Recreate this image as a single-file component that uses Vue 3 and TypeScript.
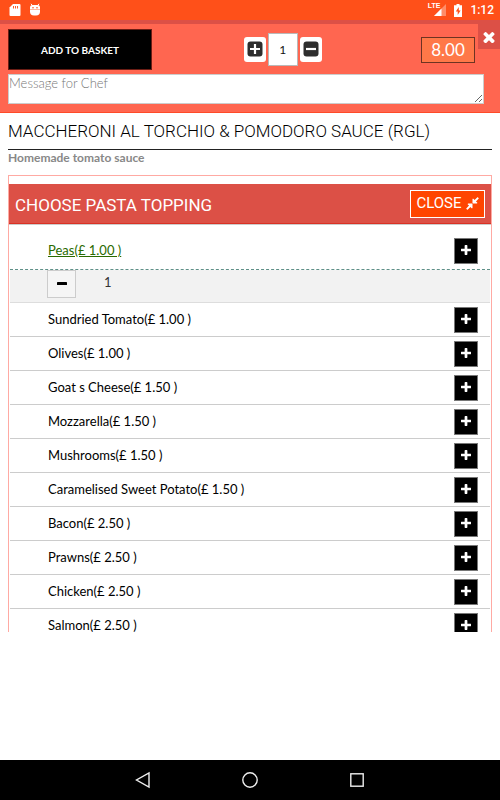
<script setup lang="ts">
import { ref } from 'vue'

interface Topping {
  name: string
  price: string
  quantity: number
}

const quantity = ref(1)
const message = ref('')

const toppings = ref<Topping[]>([
  { name: 'Peas', price: '1.00', quantity: 1 },
  { name: 'Sundried Tomato', price: '1.00', quantity: 0 },
  { name: 'Olives', price: '1.00', quantity: 0 },
  { name: 'Goat s Cheese', price: '1.50', quantity: 0 },
  { name: 'Mozzarella', price: '1.50', quantity: 0 },
  { name: 'Mushrooms', price: '1.50', quantity: 0 },
  { name: 'Caramelised Sweet Potato', price: '1.50', quantity: 0 },
  { name: 'Bacon', price: '2.50', quantity: 0 },
  { name: 'Prawns', price: '2.50', quantity: 0 },
  { name: 'Chicken', price: '2.50', quantity: 0 },
  { name: 'Salmon', price: '2.50', quantity: 0 },
])

const plusPath =
  'M1600 736v192q0 40-28 68t-68 28h-416v416q0 40-28 68t-68 28h-192q-40 0-68-28t-28-68v-416h-416q-40 0-68-28t-28-68v-192q0-40 28-68t68-28h416v-416q0-40 28-68t68-28h192q40 0 68 28t28 68v416h416q40 0 68 28t28 68z'
const timesPath =
  'M1490 1322q0 40-28 68l-136 136q-28 28-68 28t-68-28l-294-294-294 294q-28 28-68 28t-68-28l-136-136q-28-28-28-68t28-68l294-294-294-294q-28-28-28-68t28-68l136-136q28-28 68-28t68 28l294 294 294-294q28-28 68-28t68 28l136 136q28 28 28 68t-28 68l-294 294 294 294q28 28 28 68z'
const compressPath =
  'M896 960v448q0 26-19 45t-45 19-45-19l-144-144-332 332q-10 10-23 10t-23-10l-114-114q-10-10-10-23t10-23l332-332-144-144q-19-19-19-45t19-45 45-19h448q26 0 45 19t19 45zm755-672q0 13-10 23l-332 332 144 144q19 19 19 45t-19 45-45 19h-448q-26 0-45-19t-19-45v-448q0-26 19-45t45-19 45 19l144 144 332-332q10-10 23-10t23 10l114 114q10 10 10 23z'
</script>

<template>
  <div class="screen">
    <div class="status">
      <svg class="status-icon" viewBox="0 0 12 14" aria-hidden="true">
        <path d="M4 1h6.500q1 0 1 1v10q0 1-1 1h-9q-1 0-1-1V4.500z" fill="#fff" />
        <path d="M4.500 3v2.500M6.500 3v2.500M8.500 3v2.500" stroke="#ff5a28" stroke-width="1" />
      </svg>
      <svg class="status-icon" viewBox="0 0 12 14" aria-hidden="true">
        <path d="M2 .8l1.500 2M10 .8l-1.500 2" stroke="#fff" stroke-width="1" />
        <path d="M1 4.500q0-2.500 2.500-2.500h5q2.500 0 2.500 2.500v4q0 4-4 4H5q-4 0-4-4z" fill="#fff" />
        <path d="M1 6.500h10" stroke="#ff8a60" stroke-width=".6" />
        <circle cx="4" cy="4.800" r=".8" fill="#ff5019" />
        <circle cx="8" cy="4.800" r=".8" fill="#ff5019" />
      </svg>
      <span class="spacer"></span>
      <span class="signal">
        <span class="lte">LTE</span>
        <svg class="signal-icon" viewBox="0 0 12 12" aria-hidden="true">
          <path d="M12 0v12H0z" fill="#fff" fill-opacity=".35" />
          <path d="M7.500 4.500V12H0z" fill="#fff" />
        </svg>
      </span>
      <svg class="battery" viewBox="0 0 8 13" aria-hidden="true">
        <path d="M2.500 0h3v1.200H8V13H0V1.200h2.500z" fill="#fff" />
        <path d="M4.800 3L1.800 7.500h1.900V11l2.900-4.500H4.800z" fill="#ff5019" />
      </svg>
      <span class="clock">1:12</span>
    </div>

    <header class="order">
      <div class="order-row">
        <button type="button" class="basket">ADD TO BASKET</button>
        <div class="stepper">
          <button type="button" class="step" aria-label="Increase quantity" @click="quantity++">
            <svg viewBox="0 0 16 16" class="step-icon" aria-hidden="true">
              <rect x=".5" y=".5" width="15" height="15" rx="3" fill="#2e2e2e" />
              <path d="M8 3v10M3 8h10" stroke="#fff" stroke-width="2.200" />
            </svg>
          </button>
          <input v-model="quantity" class="amount" type="text" aria-label="Quantity" />
          <button type="button" class="step" aria-label="Decrease quantity" @click="quantity--">
            <svg viewBox="0 0 16 16" class="step-icon" aria-hidden="true">
              <rect x=".5" y=".5" width="15" height="15" rx="3" fill="#2e2e2e" />
              <path d="M3 8h10" stroke="#fff" stroke-width="2.200" />
            </svg>
          </button>
        </div>
        <output class="price">8.00</output>
      </div>
      <textarea v-model="message" class="message" placeholder="Message for Chef" aria-label="Message for Chef"></textarea>
      <button type="button" class="dismiss" aria-label="Close">
        <svg viewBox="256 256 1280 1280" class="dismiss-icon" aria-hidden="true"><path :d="timesPath" fill="#fff" /></svg>
      </button>
    </header>

    <main class="dish">
      <h1 class="dish-name">MACCHERONI AL TORCHIO &amp; POMODORO SAUCE (RGL)</h1>
      <p class="dish-note">Homemade tomato sauce</p>
      <section class="panel">
        <div class="panel-head">
          <h2 class="panel-title">CHOOSE PASTA TOPPING</h2>
          <button type="button" class="collapse">
            CLOSE
            <svg viewBox="120 120 1552 1552" class="collapse-icon" aria-hidden="true"><path :d="compressPath" fill="#fff" /></svg>
          </button>
        </div>
        <ul class="toppings">
          <li v-for="item in toppings" :key="item.name">
            <div class="topping" :class="{ chosen: item.quantity > 0 }">
              <span class="topping-name">{{ item.name }}(£ {{ item.price }} )</span>
              <button type="button" class="add" :aria-label="'Add ' + item.name" @click="item.quantity++">
                <svg viewBox="192 128 1408 1408" class="add-icon" aria-hidden="true"><path :d="plusPath" fill="#fff" /></svg>
              </button>
            </div>
            <div v-if="item.quantity > 0" class="selected">
              <button type="button" class="remove" :aria-label="'Remove ' + item.name" @click="item.quantity--">
                <svg viewBox="0 0 10 10" class="remove-icon" aria-hidden="true"><rect y="3" width="10" height="3" rx=".6" /></svg>
              </button>
              <span class="count">{{ item.quantity }}</span>
            </div>
          </li>
        </ul>
      </section>
    </main>

    <nav class="system-nav">
      <button type="button" class="nav-button" aria-label="Back">
        <svg viewBox="0 0 18 18" class="nav-icon"><path d="M15 2v14L2.500 9z" /></svg>
      </button>
      <button type="button" class="nav-button" aria-label="Home">
        <svg viewBox="0 0 18 18" class="nav-icon"><circle cx="9" cy="9" r="7.200" /></svg>
      </button>
      <button type="button" class="nav-button" aria-label="Recent apps">
        <svg viewBox="0 0 18 18" class="nav-icon"><rect x="2.800" y="2.800" width="12.400" height="12.400" /></svg>
      </button>
    </nav>
  </div>
</template>

<style>
body {
  background: #fff;
}
</style>

<style scoped>
* {
  box-sizing: border-box;
}
.screen {
  display: flex;
  flex-direction: column;
  height: 100vh;
  font-family: Lato, "Liberation Sans", sans-serif;
  font-size: 13px;
  color: #000;
}
button {
  padding: 0;
  margin: 0;
  border: 0;
  font-family: inherit;
  display: flex;
  align-items: center;
  justify-content: center;
}
svg {
  display: block;
  flex: none;
}
.status {
  display: flex;
  align-items: center;
  gap: 8px;
  height: 20px;
  flex: none;
  padding: 0 6px 0 9px;
  background: #ff5019;
  color: #fff;
}
.status-icon {
  width: 12px;
  height: 14px;
}
.spacer {
  flex: 1;
}
.signal {
  display: flex;
  align-items: flex-end;
  position: relative;
}
.signal-icon {
  width: 12px;
  height: 12px;
}
.lte {
  position: absolute;
  right: 6px;
  top: -2px;
  font: 700 7px/8px "Liberation Sans", sans-serif;
}
.battery {
  width: 8px;
  height: 13px;
}
.clock {
  font: 500 12px/20px Roboto, sans-serif;
}
.order {
  position: relative;
  flex: none;
  padding: 5px 16px 8px 8px;
  background: #ff6650;
  border-top: 4px solid #dc5046;
  border-bottom: 1px solid #ff4a28;
}
.order-row {
  display: grid;
  grid-template-columns: 20fr auto 13fr;
  align-items: center;
  height: 41px;
  padding-right: 9px;
  margin-bottom: 4px;
}
.basket {
  width: 144px;
  height: 41px;
  border: 1px solid #6b1d14;
  background: #000;
  color: #fff;
  font-size: 10px;
  font-weight: 700;
}
.stepper {
  display: flex;
  align-items: center;
  gap: 2px;
}
.step {
  width: 22px;
  height: 25px;
  padding-bottom: 2px;
  border-radius: 3px;
  background: #fff;
}
.step-icon {
  width: 16px;
  height: 16px;
}
.amount {
  width: 30px;
  height: 33px;
  padding: 0;
  border: 1px solid #b9b9b9;
  background: #fff;
  text-align: center;
  font: 12px Lato, sans-serif;
  color: #111;
}
.price {
  justify-self: end;
  width: 54px;
  height: 26px;
  border: 1px solid #6e3322;
  background: #ff7848;
  color: #fff;
  font-size: 17px;
  line-height: 24px;
  text-align: center;
}
.message {
  display: block;
  width: 100%;
  height: 30px;
  padding: 0;
  border: 1px solid #ccc;
  background: #fff;
  font: 300 13px/17px Lato, sans-serif;
  color: #111;
}
.message::placeholder {
  color: #777;
}
.dismiss {
  position: absolute;
  top: 0;
  right: 0;
  width: 22px;
  height: 25px;
  background: #dc5046;
}
.dismiss-icon {
  width: 12px;
  height: 12px;
}
.dish {
  flex: 1;
  min-height: 0;
  overflow: hidden;
  padding: 0 8px;
  margin-bottom: 128px;
}
.dish-name {
  margin: 0;
  padding-top: 6px;
  height: 37px;
  border-bottom: 1px solid #222;
  font: 300 17px/24px Roboto, sans-serif;
  color: #000;
}
.dish-note {
  margin: 0 0 9px;
  font-size: 12px;
  line-height: 16px;
  font-weight: 700;
  color: #888;
}
.panel {
  border: 1px solid #ffaaa3;
  padding-top: 8px;
}
.panel-head {
  display: flex;
  align-items: center;
  justify-content: space-between;
  height: 40px;
  padding: 0 6px;
  background: #dc5046;
  border-bottom: 1px solid #d93225;
}
.panel-title {
  margin: 0;
  padding-top: 3px;
  font: 400 17px/24px Roboto, sans-serif;
  color: #fff;
}
.collapse {
  gap: 4px;
  width: 75px;
  height: 28px;
  padding-bottom: 1px;
  border: 1px solid #fff;
  background: #ff4500;
  color: #fff;
  font: 400 15px/20px Roboto, sans-serif;
}
.collapse-icon {
  width: 13px;
  height: 13px;
}
.toppings {
  list-style: none;
  margin: 0;
  padding: 8px 1px 0;
  border-top: 1px solid #ccc;
}
.topping {
  display: flex;
  align-items: center;
  justify-content: space-between;
  height: 34px;
  padding: 0 12px 0 38px;
  border-bottom: 1px solid #ccc;
}
.topping-name {
  line-height: 20px;
  padding-bottom: 2px;
}
.topping.chosen {
  height: 37px;
  border-bottom: 1px dashed #5f9088;
}
.chosen .topping-name {
  color: #2a6a00;
  text-decoration: underline;
}
.add {
  width: 24px;
  height: 26px;
  padding-bottom: 2px;
  border: 1px solid #777;
  background: #000;
}
.add-icon {
  width: 10px;
  height: 10px;
}
.selected {
  display: flex;
  align-items: center;
  gap: 28px;
  height: 33px;
  padding: 0 0 4px 37px;
  border-bottom: 1px solid #ddd;
  background: #f2f2f2;
}
.remove {
  width: 29px;
  height: 28px;
  border: 1px solid #ccc;
  background: #f5f5f5;
}
.remove-icon {
  width: 10px;
  height: 10px;
}
.count {
  padding-bottom: 4px;
  line-height: 16px;
  color: #333;
}
.system-nav {
  display: flex;
  flex: none;
  align-items: center;
  justify-content: center;
  height: 40px;
  gap: 67px;
  background: #000;
}
.nav-button {
  width: 40px;
  height: 40px;
  background: none;
}
.nav-icon {
  width: 18px;
  height: 18px;
  fill: none;
  stroke: #eee;
  stroke-width: 1.4;
}
</style>
